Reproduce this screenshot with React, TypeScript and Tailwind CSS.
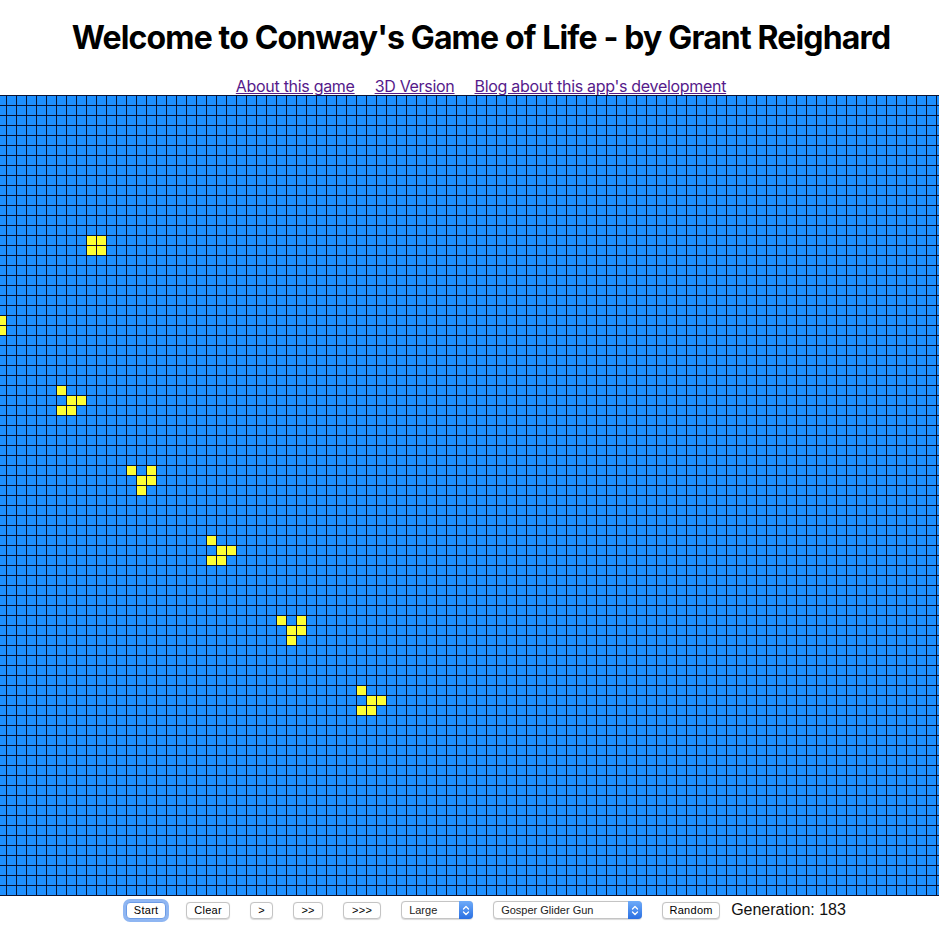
import React from "react"

const ROWS = 80
const COLS = 95

// reference columns start one cell left of the viewport, so shift by +1
const liveCells: [number, number][] = [
  [14, 8], [14, 9], [15, 8], [15, 9],
  [22, -1], [23, -1],
  [29, 5], [30, 6], [30, 7], [31, 5], [31, 6],
  [37, 12], [37, 14], [38, 13], [38, 14], [39, 13],
  [44, 20], [45, 21], [45, 22], [46, 20], [46, 21],
  [52, 27], [52, 29], [53, 28], [53, 29], [54, 28],
  [59, 35], [60, 36], [60, 37], [61, 35], [61, 36],
]
const live = new Set(liveCells.map(([r, c]) => `${r},${c + 1}`))

function Board() {
  const cells = []
  for (let r = 0; r < ROWS; r++) {
    for (let c = 0; c < COLS; c++) {
      const alive = live.has(`${r},${c}`)
      cells.push(
        <div key={`${r}-${c}`} className={alive ? "bg-[#ffff33]" : "bg-[#1e90ff]"} />
      )
    }
  }
  return (
    <div className="self-start -ml-[4px] shrink-0 grid grid-cols-[repeat(95,9px)] grid-rows-[repeat(80,9px)] gap-px p-px bg-[#0a1433]">
      {cells}
    </div>
  )
}

function Btn({ label, width, focused }: { label: string; width: string; focused?: boolean }) {
  return (
    <button
      className={`mx-[10px] h-[17px] ${width} flex items-center justify-center rounded-[4px] bg-white text-[11px] tracking-[0.3px] text-black shadow-[0_0.5px_1px_rgba(0,0,0,0.15)] border ${
        focused ? "border-[#6b9be6] ring-[3px] ring-[#8fb6f2]" : "border-[#c4c4c4]"
      }`}
    >
      {label}
    </button>
  )
}

function Chevrons() {
  return (
    <svg width="8" height="11" viewBox="0 0 8 11" fill="none" stroke="white" strokeWidth="1.3" strokeLinecap="round" strokeLinejoin="round">
      <path d="M1.5 4 L4 1.5 L6.5 4" />
      <path d="M1.5 7 L4 9.5 L6.5 7" />
    </svg>
  )
}

function Select({ label, width }: { label: string; width: string }) {
  return (
    <div className={`mx-[10px] h-[18px] ${width} flex items-center rounded-[4px] border border-[#c4c4c4] bg-white shadow-[0_0.5px_1px_rgba(0,0,0,0.15)]`}>
      <span className="flex-1 pl-[7px] text-[11px] text-[#222]">{label}</span>
      <div className="w-[14px] h-[18px] -my-px -mr-px flex items-center justify-center rounded-r-[4px] bg-gradient-to-b from-[#6eabf9] to-[#2a6fe2]">
        <Chevrons />
      </div>
    </div>
  )
}

export default function App() {
  return (
    <div className="w-full min-h-[939px] overflow-hidden bg-white font-['Liberation_Sans',Arial,sans-serif]">
      <div className="w-[962px] flex flex-col items-center pt-[18px]">
        <h1 className="text-[32px] leading-[39px] tracking-[-0.85px] font-bold text-black font-['Inter',sans-serif]">
          Welcome to Conway's Game of Life - by Grant Reighard
        </h1>
        <div className="mt-[20px] flex gap-[20px] text-[16px] leading-[18px] tracking-[-0.3px] font-['Inter',sans-serif]">
          <a href="#" className="text-[#551a8b] underline">About this game</a>
          <a href="#" className="text-[#551a8b] underline">3D Version</a>
          <a href="#" className="text-[#551a8b] underline">Blog about this app's development</a>
        </div>
        <Board />
        <div className="mt-[3px] h-[22px] flex items-center">
          <Btn label="Start" width="w-[40px]" focused />
          <Btn label="Clear" width="w-[44px]" />
          <Btn label=">" width="w-[23px]" />
          <Btn label=">>" width="w-[30px]" />
          <Btn label=">>>" width="w-[38px]" />
          <Select label="Large" width="w-[72px]" />
          <Select label="Gosper Glider Gun" width="w-[149px]" />
          <Btn label="Random" width="w-[58px]" />
          <span className="ml-px text-[16px] leading-[18px] text-[#111]">Generation: 183</span>
        </div>
      </div>
    </div>
  )
}
